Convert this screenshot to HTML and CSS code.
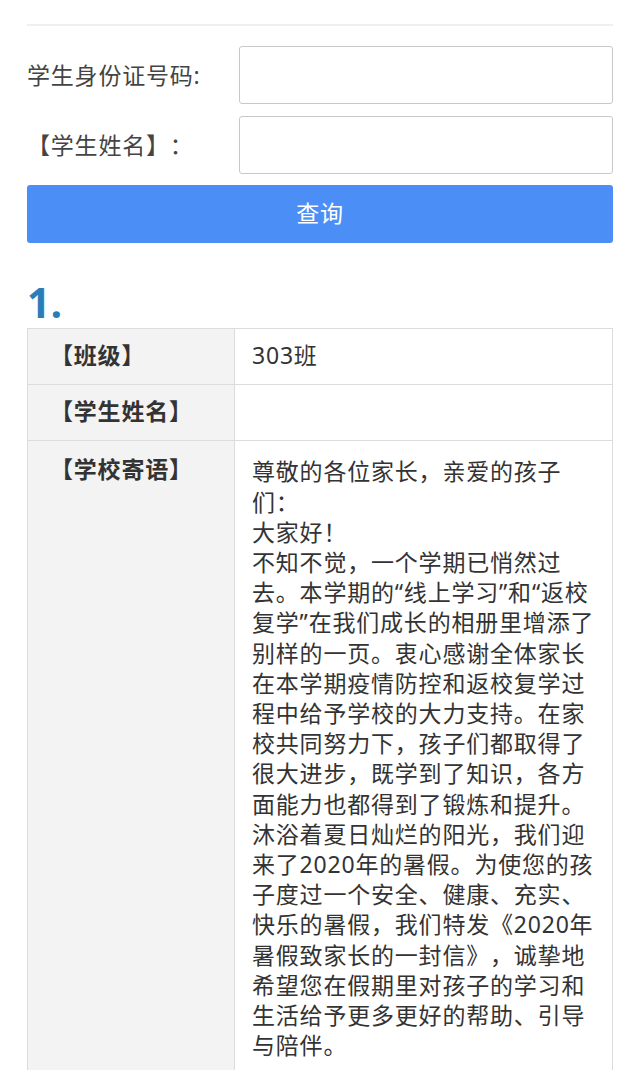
FILE: index.html
```html
<!DOCTYPE html>
<html lang="zh-CN">
<head>
<meta charset="utf-8">
<title>查询</title>
<link rel="stylesheet" href="styles.css">
</head>
<body>
<div class="page">
  <div class="topline"></div>
  <form class="query">
    <div class="field">
      <label class="field-label">学生身份证号码:</label>
      <input class="field-input" type="text">
    </div>
    <div class="field">
      <label class="field-label">【学生姓名】：</label>
      <input class="field-input" type="text">
    </div>
    <button class="btn" type="button">查询</button>
  </form>
  <h2 class="num">1.</h2>
  <table class="result">
    <tr class="row-short">
      <th>【班级】</th>
      <td>303班</td>
    </tr>
    <tr class="row-short">
      <th>【学生姓名】</th>
      <td></td>
    </tr>
    <tr>
      <th>【学校寄语】</th>
      <td class="letter">尊敬的各位家长，亲爱的孩子们：<br>大家好！<br>不知不觉，一个学期已悄然过去。本学期的“线上学习”和“返校复学”在我们成长的相册里增添了别样的一页。衷心感谢全体家长在本学期疫情防控和返校复学过程中给予学校的大力支持。在家校共同努力下，孩子们都取得了很大进步，既学到了知识，各方面能力也都得到了锻炼和提升。沐浴着夏日灿烂的阳光，我们迎来了2020年的暑假。为使您的孩子度过一个安全、健康、充实、快乐的暑假，我们特发《2020年暑假致家长的一封信》，诚挚地希望您在假期里对孩子的学习和生活给予更多更好的帮助、引导与陪伴。</td>
    </tr>
  </table>
</div>
</body>
</html>
```
FILE: styles.css
```css
* { box-sizing: border-box; }
html, body {
  margin: 0;
  padding: 0;
  background: #ffffff;
}
body {
  font-family: "Noto Sans", "Noto Sans CJK SC", sans-serif;
  color: #333333;
  font-size: 23px;
  text-spacing-trim: space-all;
}
.page {
  padding: 24px 27px 0 27px;
}
.topline {
  height: 2px;
  background: #efefef;
}
.query {
  margin-top: 20px;
}
.field {
  display: flex;
  align-items: center;
  margin-bottom: 12px;
}
.field-label {
  width: 212px;
  flex: none;
  color: #444444;
  font-size: 23px;
  line-height: 30px;
  letter-spacing: 0.8px;
}
.field-input {
  flex: 1;
  height: 58px;
  border: 1px solid #c8c8c8;
  border-radius: 3px;
  background: #fff;
  margin: 0;
}
.btn {
  display: block;
  width: 100%;
  height: 58px;
  margin-top: -1px;
  padding: 0 0 4px 0;
  border: none;
  border-radius: 3px;
  background: #4b8ff6;
  color: #ffffff;
  font-family: "Noto Sans", "Noto Sans CJK SC", sans-serif;
  font-size: 23px;
  letter-spacing: 0.8px;
}
.num {
  margin: 36px 0 0 0;
  height: 49px;
  font-family: "Open Sans", "Noto Sans", sans-serif;
  font-weight: 700;
  font-size: 41px;
  line-height: 46px;
  color: #2b7db9;
}
.result {
  width: 100%;
  border-collapse: collapse;
  table-layout: fixed;
}
.result th,
.result td {
  border: 1px solid #dcdcdc;
  padding: 13px 17px 12px 17px;
  line-height: 30.2px;
  font-size: 23px;
  letter-spacing: 0.8px;
  vertical-align: top;
  text-align: left;
}
.result th {
  width: 207px;
  padding-left: 22px;
  background: #f3f3f3;
  font-weight: 700;
  color: #333333;
}
.result td {
  background: #ffffff;
  color: #333333;
}
.result .row-short th,
.result .row-short td {
  height: 56px;
  padding-top: 11px;
  padding-bottom: 14px;
}
.result td.letter {
  padding-top: 15px;
  padding-right: 13px;
}
```
